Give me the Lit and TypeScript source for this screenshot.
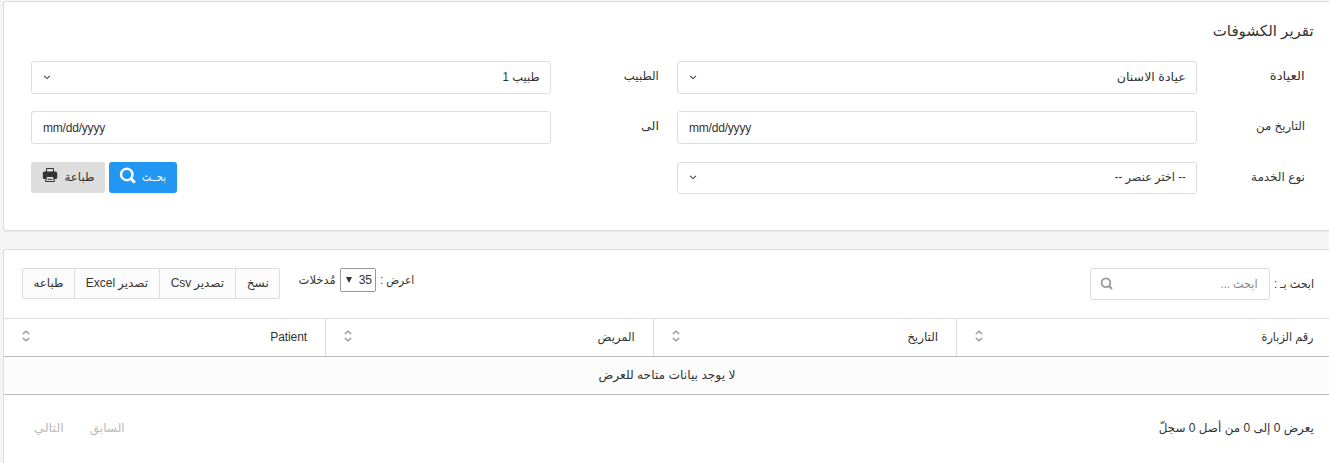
import { LitElement, html, css, svg } from "lit";
import { customElement, property, state } from "lit/decorators.js";
import { styleMap } from "lit/directives/style-map.js";

/** A run of text condensed or widened to a given measure. */
@customElement("fit-text")
class FitText extends LitElement {
  @property({ type: Number }) w = 0;
  @property() text = "";
  @state() private ratio = 1;

  static styles = css`
    :host { display: inline-flex; justify-content: flex-start; white-space: pre; }
    .box { display: inline-flex; justify-content: flex-start; }
    .run { flex: none; display: inline-block; transform-origin: right center; }
  `;

  firstUpdated() {
    const run = this.renderRoot.querySelector(".run") as HTMLElement;
    const natural = run.getBoundingClientRect().width;
    if (natural > 0) this.ratio = this.w / natural;
  }

  render() {
    return html`<span class="box" style=${styleMap({ width: `${this.w}px` })}
      ><span class="run" style=${styleMap({ transform: `scaleX(${this.ratio})` })}>${this.text}</span></span>`;
  }
}

const t = (text: string, w: number) => html`<fit-text .text=${text} .w=${w}></fit-text>`;

const chevron = svg`<svg class="chev" viewBox="0 0 8 5" width="8" height="5"><path d="M1 .8 4 3.6 7 .8" fill="none" stroke="#444" stroke-width="1.1"/></svg>`;
const sorter = svg`<svg class="sorter" viewBox="0 0 8 12" width="8" height="12"><path d="M.8 4 4 1.2 7.2 4M.8 8 4 10.8 7.2 8" fill="none" stroke="#999" stroke-width="1.5"/></svg>`;
const printer = svg`<svg class="printer" viewBox="0 0 16 16" width="16" height="16"><path d="M4.500 6V1.500h7V6" fill="none" stroke="#333" stroke-width="1"/><path fill="#333" d="M2.500 4.500h11A1.700 1.700 0 0 1 15.200 6.200V10.800A1.300 1.300 0 0 1 14 12H2A1.300 1.300 0 0 1 .8 10.800V6.200A1.700 1.700 0 0 1 2.500 4.500Z"/><path d="M4.600 9.500 3.500 14.500h9L11.400 9.500Z" fill="#ddd" stroke="#333" stroke-width="1"/><path d="M5.500 12.300h5" stroke="#333" stroke-width="1"/></svg>`;
const lens = (size: number, color: string, width: number) => svg`<svg class="lens" viewBox="0 0 16 16" width=${size} height=${size}><circle cx="7.300" cy="7" r="5.400" fill="none" stroke=${color} stroke-width=${width}/><path d="m11.500 11.300 2.500 2.500" stroke=${color} stroke-width=${width * 1.25} stroke-linecap="round"/></svg>`;

@customElement("app-root")
class AppRoot extends LitElement {
  static styles = css`
    :host {
      display: block; direction: rtl; height: 463px; overflow: hidden; background: #f5f5f5;
      box-sizing: border-box; padding: 1px 0 0 3px; color: #333;
      font: 12px/20px "Liberation Sans", "DejaVu Sans", sans-serif;
    }
    * { box-sizing: border-box; }
    svg { display: block; flex: none; }
    .card { background: #fff; border: 1px solid #ddd; border-right: 0; border-radius: 3px 0 0 3px; box-shadow: 0 1px 1px rgba(0,0,0,.05); }
    .filters { height: 230px; padding: 17px 15px 0 27px; }
    .title { font-size: 15px; line-height: 24px; height: 42px; margin: 0; font-weight: 400; }
    .form { display: grid; grid-template-columns: 108px 520px 126px 520px; padding-right: 9px; }
    .form { grid-template-rows: 33px 33px 32px; row-gap: 17px; }
    .form > .last { margin-top: 1px; }
    .label { padding-top: 5px; }
    .label.second { padding-right: 18px; }
    .field { border: 1px solid #ddd; border-radius: 3px; padding: 0 10px; display: flex; justify-content: space-between; align-items: center; }
    .field fit-text { padding-bottom: 2px; }
    .date { direction: ltr; justify-content: flex-start; padding: 0 11px; letter-spacing: -.2px; }
    .field .chev { margin-left: 1px; }
    .last.field { height: 32px; }
    .last.field .chev { margin-bottom: 1px; }
    .actions { display: flex; gap: 4px; justify-content: flex-end; }
    .btn { height: 31px; border-radius: 3px; display: flex; align-items: center; gap: 6px; padding: 0 11px; background: #ddd; }
    .btn fit-text, .cell fit-text, .cell span { padding-bottom: 2px; }
    .btn svg { margin-bottom: 5px; }
    .blue { background: #2196f3; color: #fff; }
    .blue { width: 68px; }
    .grey { width: 74px; }
    .table-card { margin-top: 18px; height: 230px; }
    .toolbar { height: 68px; padding: 18px 15px 0 18px; display: flex; align-items: flex-start; }
    .search-label { padding-top: 6px; width: 44px; }
    .search { width: 180px; height: 32px; border: 1px solid #ddd; border-radius: 3px; display: flex; align-items: center; justify-content: space-between; padding: 0 11px 0 9px; color: #888; }
    .search svg { margin-bottom: 2px; }
    .length { display: flex; gap: 4px; margin-right: auto; margin-left: 19px; line-height: 24px; }
    .num { width: 36px; height: 24px; border: 1px solid #999; border-radius: 2px; display: flex; align-items: center; justify-content: space-between; padding: 0 3px 0 5px; }
    .num svg { margin-bottom: 1px; }
    .group { display: flex; border: 1px solid #ddd; border-radius: 2px; background: #fcfcfc; height: 31px; width: 258px; }
    .cell { display: flex; align-items: center; justify-content: center; gap: 3px; border-left: 1px solid #ddd; }
    .copy { width: 44px; }
    .csv { width: 76px; }
    .excel { width: 85px; }
    .print { flex: 1; border-left: 0; }
    .grid-head { display: grid; grid-template-columns: 1fr 303px 328px 322px; height: 39px; border-top: 1px solid #ddd; border-bottom: 1px solid #bbb; }
    .th { display: flex; justify-content: space-between; align-items: center; padding: 0 18px 1px; border-right: 1px solid #ddd; }
    .th svg { margin-bottom: 2px; }
    .th span { letter-spacing: -.1px; }
    .th:first-child { border-right: 0; padding-right: 15px; }
    .empty { height: 38px; background: #fcfcfc; border-bottom: 1px solid #bbb; display: flex; justify-content: center; align-items: center; padding: 0 0 1px 0; }
    .foot { display: flex; justify-content: space-between; padding: 23px 15px 0 30px; }
    .pager { display: flex; gap: 26px; color: #bbb; }
  `;

  render() {
    return html`
      <section class="card filters">
        <h1 class="title">${t("تقرير الكشوفات", 101)}</h1>
        <div class="form">
          <div class="label">${t("العيادة", 35)}</div>
          <div class="field">${t("عيادة الاسنان", 69)}${chevron}</div>
          <div class="label second">${t("الطبيب", 35)}</div>
          <div class="field">${t("طبيب 1", 37)}${chevron}</div>
          <div class="label">${t("التاريخ من", 49)}</div>
          <div class="field date">mm/dd/yyyy</div>
          <div class="label second">${t("الى", 18)}</div>
          <div class="field date">mm/dd/yyyy</div>
          <div class="label last">${t("نوع الخدمة", 54)}</div>
          <div class="field last">${t("-- اختر عنصر --", 71)}${chevron}</div>
          <div></div>
          <div class="actions last">
            <div class="btn blue">${t("بحــث", 24)}${lens(17, "#fff", 2.3)}</div>
            <div class="btn grey">${t("طباعة", 30)}${printer}</div>
          </div>
        </div>
      </section>
      <section class="card table-card">
        <div class="toolbar">
          <div class="search-label">${t("ابحث بـ :", 40)}</div>
          <div class="search">${t("ابحث ...", 37)}${lens(13, "#999", 2.1)}</div>
          <div class="length">
            ${t("اعرض :", 34)}
            <span class="num">35<svg viewBox="0 0 6 6" width="6" height="6"><path d="M0 0h6L3 6Z" fill="#333"/></svg></span>
            ${t("مُدخلات", 37)}
          </div>
          <div class="group">
            <div class="cell copy">${t("نسخ", 22)}</div>
            <div class="cell csv">${t("تصدير", 30)}<span>Csv</span></div>
            <div class="cell excel">${t("تصدير", 30)}<span>Excel</span></div>
            <div class="cell print">${t("طباعه", 30)}</div>
          </div>
        </div>
        <div class="grid-head">
          <div class="th">${t("رقم الزبارة", 52)}${sorter}</div>
          <div class="th">${t("التاريخ", 31)}${sorter}</div>
          <div class="th">${t("المريض", 37)}${sorter}</div>
          <div class="th"><span>Patient</span>${sorter}</div>
        </div>
        <div class="empty">${t("لا يوجد بيانات متاحه للعرض", 137)}</div>
        <div class="foot">
          ${t("يعرض 0 إلى 0 من أصل 0 سجلّ", 155)}
          <div class="pager">${t("السابق", 35)}${t("التالي", 30)}</div>
        </div>
      </section>
    `;
  }
}
